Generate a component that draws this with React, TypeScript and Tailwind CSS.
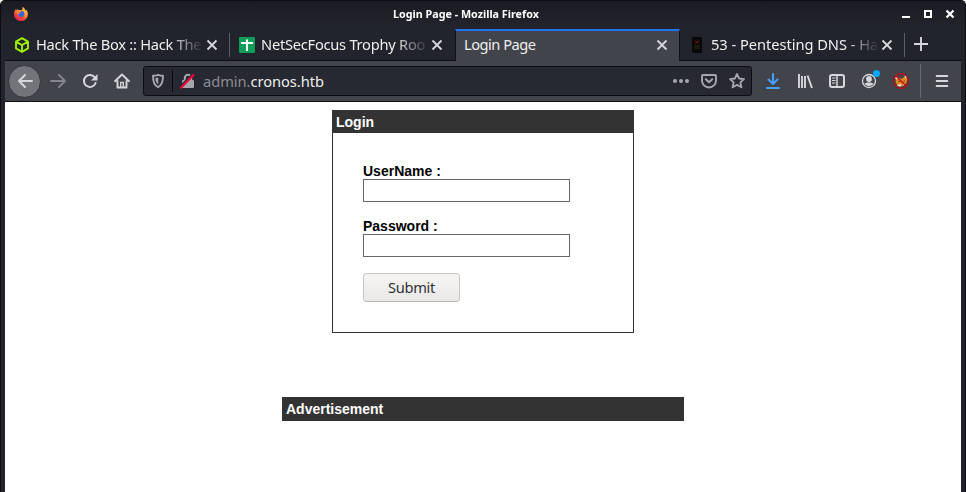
import type { ReactNode } from "react";

const ui = "font-['Noto_Sans',sans-serif]";

function Icon({ children, className = "" }: { children: ReactNode; className?: string }) {
  return (
    <svg viewBox="0 0 16 16" width="16" height="16" fill="none" className={`block shrink-0 ${className}`}>
      {children}
    </svg>
  );
}

function FirefoxLogo() {
  return (
    <Icon className="-mt-px">
      <defs>
        <linearGradient id="flame" x1="13" y1="1" x2="4" y2="15" gradientUnits="userSpaceOnUse">
          <stop offset="0" stopColor="#ffe04a" />
          <stop offset=".45" stopColor="#ff8b2d" />
          <stop offset=".75" stopColor="#f5393f" />
          <stop offset="1" stopColor="#d61e62" />
        </linearGradient>
      </defs>
      <path d="M9.2.8c2.7 1.4 3.1 3.3 3.4 4 .6-.4.3-1.4.3-1.4 1.2 1.1 2 2.8 2 5A6.9 6.9 0 0 1 8 15.1 6.9 6.9 0 0 1 1 8.300c0-2.500 1-4.200 2-5.300l.4 1.300L4.800 3l.3 1.500c1-.5 2.300-.6 3.500-.2C9.800 3.400 9.800 2 9.200.8Z" fill="url(#flame)" />
      <circle cx="8.300" cy="7.800" r="3.100" fill="#3c62d8" />
      <path d="M4.800 4.700c1.300-.5 2.600-.2 3.500.6-.3 1-1.200 1.200-2 1.400-.3 1.100-.8 1.500-1.600 1.800-.6-1.200-.6-2.600.1-3.800Z" fill="#ff8a35" />
    </Icon>
  );
}

function BoxLogo() {
  return (
    <Icon>
      <path d="M8 1.200 14 4.600v6.800L8 14.800 2 11.400V4.600ZM2.300 4.800 8 8.100l5.700-3.300M8 8v6.600" stroke="#9fef00" strokeWidth="1.900" strokeLinejoin="round" />
    </Icon>
  );
}

function SheetLogo() {
  return (
    <Icon>
      <rect width="16" height="16" rx="1" fill="#0f9d58" />
      <path d="M2 6h12M8 2.500v11.500" stroke="#fff" strokeWidth="2" />
    </Icon>
  );
}

function BookLogo() {
  return (
    <Icon>
      <rect x="3" width="10" height="16" rx="1" fill="#090808" />
      <path d="m5.500 3.500 4 3m.5-3-4 3.500" stroke="#72131a" />
      <path d="M5 9h6M5 11h6" stroke="#352812" strokeWidth="1" />
    </Icon>
  );
}

function Cross() {
  return (
    <Icon>
      <path d="m3.500 3.500 9 9m0-9-9 9" stroke="#d7d7db" strokeWidth="1.800" />
    </Icon>
  );
}

type TabProps = { title: string; icon?: ReactNode; active?: boolean; divider?: boolean; tracking?: string };

function Tab({ title, icon, active, divider, tracking = "" }: TabProps) {
  return (
    <div className={`relative flex h-8 w-[225px] shrink-0 items-center ${active ? "border-x border-t-2 border-x-[#111218] border-t-[#2374f5] bg-[#42444c] pb-[2px] pl-2" : "pl-[9px]"}`}>
      {icon && <span className="mr-1.5">{icon}</span>}
      <span className={`-mt-[2px] h-5 text-[14.67px] leading-5 whitespace-nowrap text-[#eeeeec] ${tracking} ${icon ? "w-[168px] [mask-image:linear-gradient(to_right,black_134px,transparent_168px)]" : "w-[190px]"}`}>
        {title}
      </span>
      <Cross />
      {divider && <span className="absolute top-1 right-0 h-6 w-px bg-[#5d5e64]" />}
    </div>
  );
}

function TitleBar() {
  return (
    <div className="flex h-[26px] items-center">
      <div className="flex w-[388px] pl-2"><FirefoxLogo /></div>
      <h1 className="w-[150px] text-[11px] leading-4 font-bold whitespace-nowrap text-white">
        <span className="inline-block origin-left scale-x-[0.978]">Login Page - Mozilla Firefox</span>
      </h1>
      <div className="ml-auto flex gap-1.5 pr-[3px] text-white">
        <Icon><path d="M4 11h8" stroke="currentColor" strokeWidth="2" /></Icon>
        <Icon><path d="M5 5h6v6H5Z" stroke="currentColor" strokeWidth="2" /></Icon>
        <Icon><path d="m4.500 4.500 7 7m0-7-7 7" stroke="currentColor" strokeWidth="2.200" /></Icon>
      </div>
    </div>
  );
}

function Toolbar() {
  return (
    <div className="flex h-[41px] items-center border-b border-[#0c0d11] bg-[#42444c] text-[#d7d7db]">
      <button className="ml-[3px] flex h-[33px] w-[33px] items-center justify-center rounded-full border border-[#34353a] bg-[#737479]">
        <Icon><path d="M15 8H2m6-6L2 8l6 6" stroke="currentColor" strokeWidth="2" strokeLinecap="round" strokeLinejoin="round" /></Icon>
      </button>
      <Icon className="ml-[9px] text-[#85868b]"><path d="M1 8h14M9 2l6 6-6 6" stroke="currentColor" strokeWidth="1.800" strokeLinecap="round" strokeLinejoin="round" /></Icon>
      <Icon className="ml-4">
        <path d="M13 4.700A6 6 0 1 0 13.600 10" stroke="currentColor" strokeWidth="2" strokeLinecap="round" />
        <path d="M15.500 1v6.500H9Z" fill="currentColor" />
      </Icon>
      <Icon className="ml-4">
        <path d="m1 8.200 7-6.700 7 6.700M3.500 8v6.500h9V8" stroke="currentColor" strokeWidth="1.900" strokeLinecap="round" strokeLinejoin="round" />
        <path d="M6.700 14V9.500h2.600V14" stroke="currentColor" strokeWidth="1.300" />
      </Icon>
      <div className="ml-[13px] flex h-[30px] w-[609px] items-center rounded-[3px] border border-[#0c0d11] bg-[#272932] text-[#a6a7ac]">
        <Icon className="ml-1.5">
          <path d="M8 1.800c2 .8 4 .9 5 .9 0 5.300-1 9.500-5 11.500-4-2-5-6.200-5-11.500 1 0 3-.1 5-.9Z" stroke="currentColor" strokeWidth="1.900" strokeLinejoin="round" />
          <path d="M8.300 4.500v7C6.200 9.900 5.400 7.500 5.300 4.900Z" fill="currentColor" />
        </Icon>
        <span className="ml-[6px] h-[22px] w-px bg-[#090a0d]" />
        <Icon className="ml-[7px]">
          <path d="M4.800 8V5a3.200 3.200 0 0 1 6.400 0V8" stroke="currentColor" strokeWidth="2" />
          <rect x="2" y="7" width="12" height="8" rx="1.300" fill="currentColor" />
          <path d="M.5 13 13 .7" stroke="#272932" strokeWidth="1.700" />
          <path d="M1 14.700 13.500 2" stroke="#ff0039" strokeWidth="2" strokeLinecap="round" />
        </Icon>
        <span className="ml-[7px] text-[14.67px] leading-5 tracking-[-0.04px] text-[#8b8c94]">admin.<span className="text-[#eeeeec]">cronos.htb</span></span>
        <span className="mr-1.5 ml-auto flex gap-3">
          <Icon><g fill="currentColor"><circle cx="2" cy="8" r="2" /><circle cx="8" cy="8" r="2" /><circle cx="14" cy="8" r="2" /></g></Icon>
          <Icon>
            <path d="M2 2h12q1 0 1 1v4.500a7 7 0 0 1-14 0V3q0-1 1-1Z" stroke="currentColor" strokeWidth="1.900" />
            <path d="m4.800 6.300 3.200 3 3.200-3" stroke="currentColor" strokeWidth="2" strokeLinecap="round" strokeLinejoin="round" />
          </Icon>
          <Icon><path d="m8 1 2.100 4.500 4.900.6-3.600 3.300 1 4.900L8 11.900l-4.400 2.400 1-4.900L1 6.100l4.900-.6Z" stroke="currentColor" strokeWidth="1.800" strokeLinejoin="round" /></Icon>
        </span>
      </div>
      <Icon className="ml-[13px] text-[#45a1ff]"><path d="M8 1v10M3.500 6.500 8 11l4.500-4.500M2 15h12" stroke="currentColor" strokeWidth="2" strokeLinecap="round" strokeLinejoin="round" /></Icon>
      <Icon className="ml-4"><path d="M2 1v14M5 3v12M8 3v12m2.500-12.500 4.500 12.500" stroke="currentColor" strokeWidth="1.900" /></Icon>
      <Icon className="ml-4">
        <rect x="1" y="2" width="14" height="12" rx="2" stroke="currentColor" strokeWidth="2" />
        <path d="M8 2v12" stroke="currentColor" strokeWidth="1.500" /><path d="M3 5h3.500M3 7.500h3.500M3 10h3.500" stroke="currentColor" strokeWidth="1" />
      </Icon>
      <span className="relative ml-4">
        <Icon>
          <circle cx="8" cy="8" r="6.500" stroke="currentColor" strokeWidth="1.300" />
          <circle cx="8" cy="6" r="2.900" fill="currentColor" /><path d="M3.500 10.500c2-1.500 7-1.500 9 0-.8 3.200-8.200 3.200-9 0Z" fill="currentColor" />
        </Icon>
        <span className="absolute -top-[3px] left-[12px] h-[7px] w-[7px] rounded-full bg-[#00a9ff]" />
      </span>
      <Icon className="ml-4">
        <path d="M3 6.500 5 4l3 2 2.500-1.500L13 3l1.300 4-1.300 3.500-4.500 3-4-1L2.500 9Z" fill="#e08a1e" />
        <path d="m11 2.500 2.300.5.7 2.500-1.800-1ZM2 5l1.500-1.500L5.500 5 3 6.500Zm2 6.500 2 .5 1-1.500 1.500 2-1.500 1.300-2.500-1Zm5.500-.3 2.500-.7-1.500 2.200Z" fill="#f2e6d4" />
        <path d="M5.500 8.500H7M10.500 8H12" stroke="#6b3510" />
        <circle cx="8" cy="8" r="7.300" stroke="#c90813" strokeWidth="1.200" />
        <path d="m3 3 10 10" stroke="#c90813" strokeWidth="1.400" />
      </Icon>
      <span className="ml-[11px] h-[34px] w-px bg-[#67686e]" />
      <Icon className="ml-[13px]"><path d="M2.700 3h10.600M2.700 8h10.600M2.700 13h10.600" stroke="currentColor" strokeWidth="2" strokeLinecap="round" /></Icon>
    </div>
  );
}

function Field({ label, type }: { label: string; type: string }) {
  return (
    <label className="mb-4 block text-[14px] leading-4 font-bold text-black">
      {label}
      <input type={type} className="block h-[23px] w-[207px] border border-[#666] bg-white px-1 outline-none" />
    </label>
  );
}

export default function App() {
  return (
    <div className="h-[492px] w-[966px] overflow-hidden bg-white">
      <div className={`flex h-full flex-col rounded-t-[5px] border-x border-t border-[#0c0d11] bg-[#22242d] px-1 ${ui}`}>
        <div className="-mx-1 rounded-t-[4px] bg-linear-to-b from-[#1b1c22] to-[#22242d] px-1"><TitleBar /></div>
        <div className="mt-[2px] flex h-8 border-b border-[#0c0d11]">
          <Tab title="Hack The Box :: Hack The" icon={<BoxLogo />} tracking="tracking-[-0.26px]" divider />
          <Tab title="NetSecFocus Trophy Roo" icon={<SheetLogo />} tracking="tracking-[-0.25px]" />
          <Tab title="Login Page" tracking="tracking-[-0.5px]" active />
          <Tab title="53 - Pentesting DNS - Ha" icon={<BookLogo />} tracking="tracking-[-0.04px]" divider />
          <span className="flex h-[30px] items-center pl-2 text-[#d7d7db]"><Icon><path d="M8 1v14M1 8h14" stroke="currentColor" strokeWidth="1.900" /></Icon></span>
        </div>
        <Toolbar />
        <main className="flex flex-1 flex-col items-center bg-white pt-2 font-['Liberation_Sans',Arial,sans-serif]">
          <section className="h-[223px] w-[302px] border border-[#333]">
            <h2 className="h-[22px] bg-[#333] px-[3px] py-[3px] text-[14px] leading-4 font-bold text-white">Login</h2>
            <form className="px-[30px] pt-[30px]">
              <Field label="UserName :" type="text" />
              <Field label="Password :" type="password" />
              <button type="button" className={`h-[29px] w-[97px] rounded-[4px] border border-[#cdc7c2] border-b-[#bfb8b1] bg-linear-to-b from-[#f6f5f4] to-[#e9e8e6] pb-[2px] text-[14.67px] leading-5 tracking-[-0.3px] text-[#2e3436] ${ui}`}>Submit</button>
            </form>
          </section>
          <h2 className="mt-16 h-6 w-[402px] bg-[#333] px-1 py-1 text-[14px] leading-4 font-bold text-white">Advertisement</h2>
        </main>
      </div>
    </div>
  );
}
